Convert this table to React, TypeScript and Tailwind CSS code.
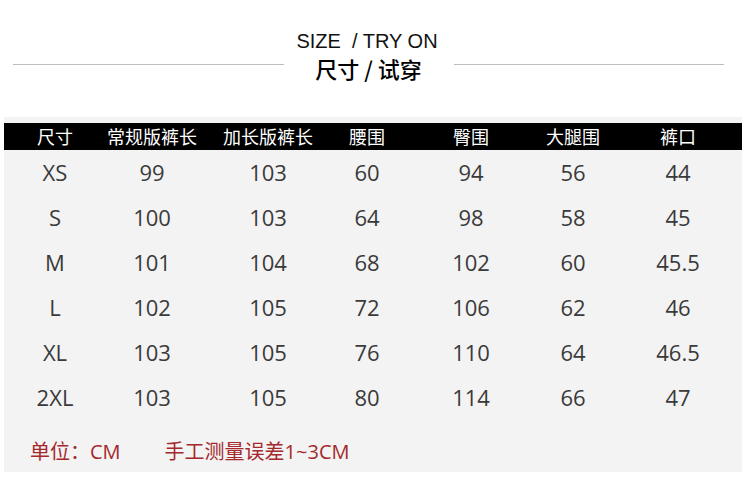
import React from 'react';

const columns = [
  { label: '尺寸', w: 'w-[102px]' },
  { label: '常规版裤长', w: 'w-[92px]' },
  { label: '加长版裤长', w: 'w-[140px]' },
  { label: '腰围', w: 'w-[58px]' },
  { label: '臀围', w: 'w-[150px]' },
  { label: '大腿围', w: 'w-[54px]' },
  { label: '裤口', w: 'w-[142px] pl-[14px]' },
];

const rows = [
  ['XS', '99', '103', '60', '94', '56', '44'],
  ['S', '100', '103', '64', '98', '58', '45'],
  ['M', '101', '104', '68', '102', '60', '45.5'],
  ['L', '102', '105', '72', '106', '62', '46'],
  ['XL', '103', '105', '76', '110', '64', '46.5'],
  ['2XL', '103', '105', '80', '114', '66', '47'],
];

const cjk = "font-['Noto_Sans_CJK_SC','Noto_Sans',sans-serif]";

export default function App() {
  return (
    <div className="w-[750px] h-[488px] bg-white overflow-hidden">
      {/* Title */}
      <div className="pt-[31px] pr-[16px] text-center text-[20px] leading-[20px] text-[#111] font-['Liberation_Sans',Arial,sans-serif] whitespace-pre">
        {'SIZE  / TRY ON'}
      </div>
      <div className="mt-[4px] flex items-start pl-[13px] pr-[26px]">
        <div className="flex-1 h-px bg-[#bdbdbd] mt-[9px]" />
        <div className={`w-[170px] text-center text-[22px] leading-[26px] font-medium text-black ${cjk}`}>
          尺寸 / 试穿
        </div>
        <div className="flex-1 h-px bg-[#bdbdbd] mt-[9px]" />
      </div>

      {/* Size table */}
      <div className="mt-[36px] ml-[4px] w-[738px] bg-[#f3f3f3] pt-[6px]">
        <div className={`flex h-[27px] items-center bg-black text-white text-[18px] ${cjk}`}>
          {columns.map((c) => (
            <div key={c.label} className={`${c.w} flex justify-center whitespace-nowrap`}>
              {c.label}
            </div>
          ))}
        </div>
        {rows.map((r) => (
          <div key={r[0]} className="flex h-[45px] items-center text-[22px] text-[#3a3a3a] font-['Open_Sans','Noto_Sans',sans-serif]">
            {r.map((v, i) => (
              <div key={i} className={`${columns[i].w} flex justify-center whitespace-nowrap`}>
                {v}
              </div>
            ))}
          </div>
        ))}
        <div className={`flex h-[52px] items-center pt-[12px] text-[20px] text-[#a5292c] font-['Open_Sans','Noto_Sans_CJK_SC',sans-serif]`}>
          <span className="ml-[26px]">单位：CM</span>
          <span className="ml-[44px]">手工测量误差1~3CM</span>
        </div>
      </div>
    </div>
  );
}
